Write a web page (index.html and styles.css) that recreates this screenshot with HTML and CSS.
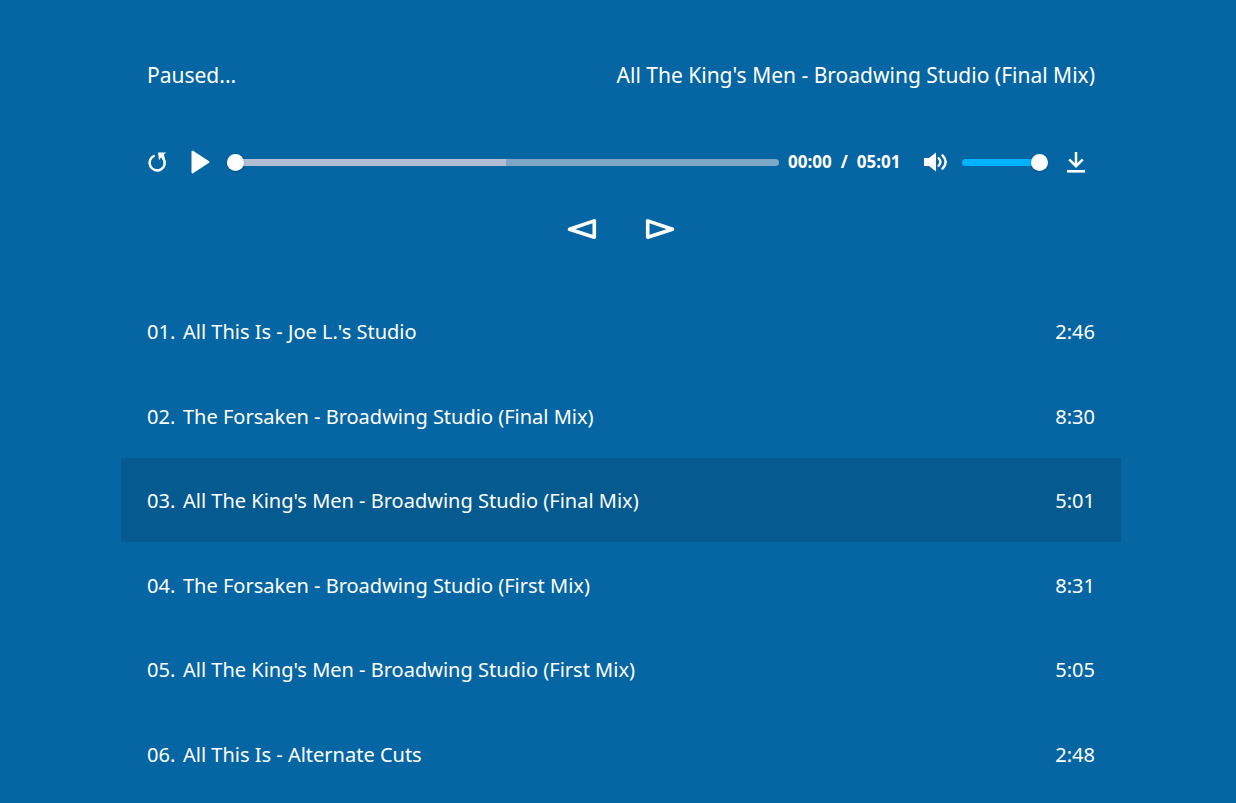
FILE: index.html
```html
<!DOCTYPE html>
<html lang="en">
<head>
<meta charset="utf-8">
<title>Audio player</title>
<link rel="stylesheet" href="styles.css">
</head>
<body>
<main class="player">
  <header class="now-playing">
    <span class="status">Paused...</span>
    <span class="title">All The King's Men - Broadwing Studio (Final Mix)</span>
  </header>

  <div class="controls">
    <button class="icon-button" type="button" aria-label="Restart">
      <svg width="20" height="22" viewBox="0 0 20 22"><path d="M7.6 4.6A7.6 7.6 0 1 0 16.4 7.4" fill="none" stroke="currentColor" stroke-width="2.5"/><path d="M11 1.5h8l-2.2 2.2 1.2 4-2.4 1.2-1.4-2.6-2.2 3z" fill="currentColor"/></svg>
    </button>
    <button class="icon-button" type="button" aria-label="Play">
      <svg width="20" height="24" viewBox="0 0 20 24"><path d="M1.5 1.5v21L17.5 12z" fill="currentColor" stroke="currentColor" stroke-width="2" stroke-linejoin="round"/></svg>
    </button>
    <input class="range seek" type="range" min="0" max="301" value="0" aria-label="Seek">
    <div class="time"><span>00:00</span><span>/</span><span>05:01</span></div>
    <button class="icon-button" type="button" aria-label="Mute">
      <svg width="24" height="20" viewBox="0 0 24 20"><path d="M0 6h5l7-5.4v18.8L5 14H0z" fill="currentColor"/><path d="M14.7 6.2q3.4 3.8 0 7.6M18.5 3.4q6.4 6.6 0 13.2" fill="none" stroke="currentColor" stroke-width="2.4" stroke-linecap="round"/></svg>
    </button>
    <input class="range volume" type="range" min="0" max="100" value="100" aria-label="Volume">
    <button class="icon-button" type="button" aria-label="Download">
      <svg width="18" height="22" viewBox="0 0 18 22"><path d="M9 1v14M2.2 8.4 9 15.2l6.8-6.8" fill="none" stroke="currentColor" stroke-width="2.5"/><path d="M0 19h18v2.6H0z" fill="currentColor"/></svg>
    </button>
  </div>

  <nav class="skip" aria-label="Track navigation">
    <button class="icon-button" type="button" aria-label="Previous track">
      <svg width="30" height="22" viewBox="0 0 30 22"><path d="M2.5 11.2 27.3 2.9v16.4z" fill="none" stroke="currentColor" stroke-width="3.6" stroke-linejoin="round"/></svg>
    </button>
    <button class="icon-button" type="button" aria-label="Next track">
      <svg width="30" height="22" viewBox="0 0 30 22"><path d="M27.5 11.2 2.7 2.9v16.4z" fill="none" stroke="currentColor" stroke-width="3.6" stroke-linejoin="round"/></svg>
    </button>
  </nav>

  <ol class="tracks">
    <li class="track"><span class="number">01.</span><span class="name">All This Is - Joe L.'s Studio</span><span>2:46</span></li>
    <li class="track"><span class="number">02.</span><span class="name">The Forsaken - Broadwing Studio (Final Mix)</span><span>8:30</span></li>
    <li class="track selected"><span class="number">03.</span><span class="name">All The King's Men - Broadwing Studio (Final Mix)</span><span>5:01</span></li>
    <li class="track"><span class="number">04.</span><span class="name">The Forsaken - Broadwing Studio (First Mix)</span><span>8:31</span></li>
    <li class="track"><span class="number">05.</span><span class="name">All The King's Men - Broadwing Studio (First Mix)</span><span>5:05</span></li>
    <li class="track"><span class="number">06.</span><span class="name">All This Is - Alternate Cuts</span><span>2:48</span></li>
  </ol>
</main>
</body>
</html>
```
FILE: styles.css
```css
* { box-sizing: border-box; }

body {
  margin: 0;
  background: #0665a3;
  color: #fff;
  font-family: "Noto Sans", "Open Sans", sans-serif;
  font-size: 20px;
  line-height: 28px;
}

.player { padding: 60px 115px 0 121px; }

.now-playing {
  display: flex;
  justify-content: space-between;
  padding: 0 26px;
  font-size: 21px;
  line-height: 30px;
}

.controls {
  display: grid;
  grid-template-columns: 44px 36px 1fr 145px 38px 105px 28px;
  align-items: center;
  height: 30px;
  margin-top: 57px;
  padding: 0 26px;
}

.icon-button {
  display: flex;
  justify-self: start;
  padding: 0;
  border: 0;
  background: none;
  color: inherit;
  cursor: pointer;
}

.time {
  display: flex;
  gap: 9px;
  padding-left: 9px;
  font-size: 17px;
  font-weight: 700;
}

.range {
  appearance: none;
  width: 100%;
  height: 18px;
  margin: 0;
  background: none;
}

.range::-webkit-slider-runnable-track {
  height: 7px;
  border-radius: 4px;
}

.range::-webkit-slider-thumb {
  appearance: none;
  width: 17px;
  height: 17px;
  margin-top: -5px;
  border-radius: 50%;
  background: #fff;
  box-shadow: 0 1px 2px rgba(0, 30, 60, 0.3);
}

.seek::-webkit-slider-runnable-track {
  background: linear-gradient(#b1bdd2, #b1bdd2) 0 0 / 279px 7px no-repeat, #7ea7c5;
}

.volume { width: 86px; }

.volume::-webkit-slider-runnable-track { background: #00b2ff; }

.skip {
  display: flex;
  justify-content: center;
  gap: 48px;
  margin-top: 41px;
}

.tracks {
  margin: 49px 0 0;
  padding: 0;
  list-style: none;
}

.track {
  display: flex;
  padding: 29px 26px 27px;
}

.track:nth-child(odd) { margin-bottom: 1px; }

.number { width: 36px; }

.name { flex: 1; }

.selected { background: #055a90; }
```
